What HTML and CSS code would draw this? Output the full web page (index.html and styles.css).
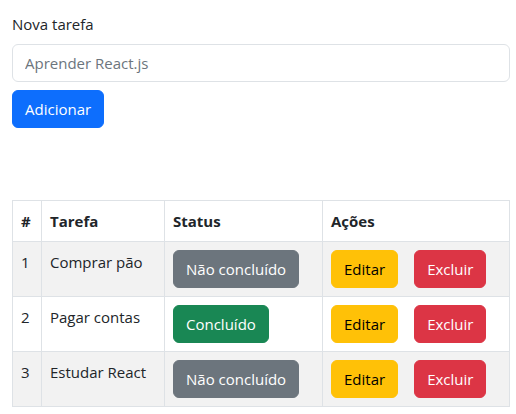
FILE: index.html
```html
<!DOCTYPE html>
<html lang="pt-BR">
<head>
<meta charset="utf-8">
<title>Tarefas</title>
<link rel="stylesheet" href="styles.css">
</head>
<body>
<main class="app">
  <form class="task-form">
    <label class="form-label" for="task">Nova tarefa</label>
    <input class="form-control" id="task" type="text" placeholder="Aprender React.js">
    <button class="btn btn-primary btn-add" type="button">Adicionar</button>
  </form>

  <table class="task-table">
    <colgroup>
      <col class="col-num">
      <col class="col-task">
      <col class="col-status">
      <col class="col-actions">
    </colgroup>
    <thead>
      <tr>
        <th>#</th>
        <th>Tarefa</th>
        <th>Status</th>
        <th>Ações</th>
      </tr>
    </thead>
    <tbody>
      <tr class="striped">
        <td>1</td>
        <td>Comprar pão</td>
        <td><button class="btn btn-secondary" type="button">Não concluído</button></td>
        <td><div class="actions"><button class="btn btn-warning" type="button">Editar</button><button class="btn btn-danger" type="button">Excluir</button></div></td>
      </tr>
      <tr>
        <td>2</td>
        <td>Pagar contas</td>
        <td><button class="btn btn-success" type="button">Concluído</button></td>
        <td><div class="actions"><button class="btn btn-warning" type="button">Editar</button><button class="btn btn-danger" type="button">Excluir</button></div></td>
      </tr>
      <tr class="striped">
        <td>3</td>
        <td>Estudar React</td>
        <td><button class="btn btn-secondary" type="button">Não concluído</button></td>
        <td><div class="actions"><button class="btn btn-warning" type="button">Editar</button><button class="btn btn-danger" type="button">Excluir</button></div></td>
      </tr>
    </tbody>
  </table>
</main>
</body>
</html>
```
FILE: styles.css
```css
* { box-sizing: border-box; }

body {
  margin: 0;
  font-family: "Open Sans", "Noto Sans", sans-serif;
  font-size: 15px;
  line-height: 24px;
  color: #212529;
  background: #fff;
}

.app {
  padding: 12px 6px 0 12px;
}

.task-form {
  display: flex;
  flex-direction: column;
  align-items: flex-start;
}

.form-label {
  margin-bottom: 8px;
}

.form-control {
  width: 100%;
  height: 38px;
  padding: 6px 12px;
  font: inherit;
  color: #212529;
  border: 1px solid #dee2e6;
  border-radius: 6px;
  background: #fff;
}

.form-control::placeholder {
  color: #6c757d;
}

.btn {
  display: inline-block;
  height: 38px;
  padding: 6px 12px;
  font: inherit;
  line-height: 24px;
  border: 1px solid transparent;
  border-radius: 6px;
  white-space: nowrap;
  cursor: pointer;
}

.btn-add { margin-top: 8px; }

.btn-primary { background: #0d6efd; border-color: #0d6efd; color: #fff; }
.btn-secondary { background: #6c757d; border-color: #6c757d; color: #fff; }
.btn-success { background: #198754; border-color: #198754; color: #fff; }
.btn-warning { background: #ffc107; border-color: #ffc107; color: #000; }
.btn-danger { background: #dc3545; border-color: #dc3545; color: #fff; }

.task-table {
  width: 100%;
  margin-top: 72px;
  border-collapse: collapse;
  table-layout: fixed;
}

.col-num { width: 29px; }
.col-task { width: 123px; }
.col-status { width: 158px; }

.task-table th,
.task-table td {
  padding: 8px;
  border: 1px solid #dee2e6;
  text-align: left;
  vertical-align: top;
}

.task-table th {
  font-weight: 700;
}

.task-table .striped td {
  background: #f2f2f2;
}

.actions {
  display: flex;
  gap: 16px;
}
```
